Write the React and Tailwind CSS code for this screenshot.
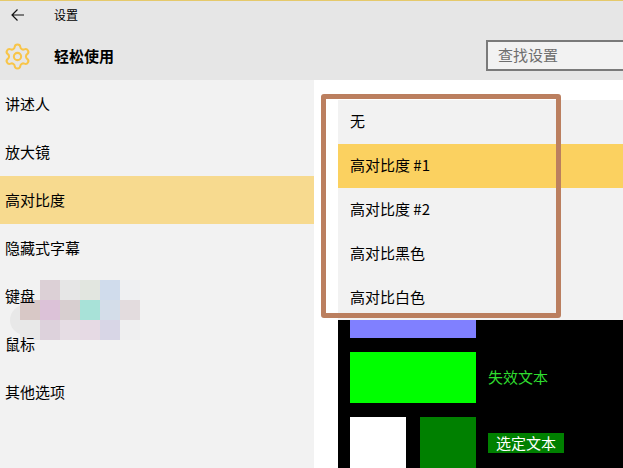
import React from 'react';
import { Settings } from 'lucide-react';

const navItems = ['讲述人', '放大镜', '高对比度', '隐藏式字幕', '键盘', '鼠标', '其他选项'];
const themes = ['无', '高对比度 #1', '高对比度 #2', '高对比黑色', '高对比白色'];

// blurred patch over the sidebar
const mosaic = [
  'bg-transparent', 'bg-[#dcd0d6]', 'bg-[#e6e6e6]', 'bg-[#e2e6e0]', 'bg-[#d0dcec]', 'bg-[#eff0f2]',
  'bg-[#d8c8c6]', 'bg-[#dcc2d8]', 'bg-[#d8cfd0]', 'bg-[#a8e2d8]', 'bg-[#d4dde9]', 'bg-[#e3dcde]',
  'bg-[#e8e8e8]', 'bg-[#ddd2dc]', 'bg-[#e6dde4]', 'bg-[#e6dae4]', 'bg-[#d8d6e6]', 'bg-[#efeff0]',
];

const App = () => {
  return (
    <div className="relative w-[623px] h-[468px] overflow-hidden flex flex-col bg-white text-black text-[15px] font-['Noto_Sans_CJK_SC','Liberation_Sans',sans-serif]">
      <div className="h-[80px] shrink-0 bg-[#e6e6e6] border-t border-[#e5c96b]">
        <div className="h-[28px] flex items-center">
          <div className="w-[54px] pl-[11px]">
            <svg width="14" height="14" viewBox="0 0 14 14" fill="none" stroke="#111" strokeWidth="1.2">
              <path d="M13 7H1M6.5 1.5L1 7l5.5 5.5" />
            </svg>
          </div>
          <span className="text-[12px]">设置</span>
        </div>
        <div className="mt-[3px] h-[48px] flex items-center">
          <div className="w-[54px] pl-[3px]">
            <Settings size={29} strokeWidth={1.7} className="text-[#f8c549]" />
          </div>
          <span className="font-semibold flex-1">轻松使用</span>
          <div className="w-[137px] h-[31px] mb-[1px] border-2 border-r-0 border-[#7a7a7a] bg-[#f2f2f2] pl-[10px] flex items-center text-[#6e6e6e]">
            查找设置
          </div>
        </div>
      </div>

      <div className="flex-1 flex min-h-0">
        <div className="relative w-[314px] shrink-0 bg-[#f2f2f2]">
          <div className="absolute left-[10px] top-[225px] w-[30px] h-[30px] rounded-full bg-[#e8e8e8]" />
          <div className="absolute left-[20px] top-[200px] grid grid-cols-[repeat(6,20px)] grid-rows-[repeat(3,20px)]">
            {mosaic.map((c, i) => (
              <div key={i} className={c} />
            ))}
          </div>
          {navItems.map((item) => (
            <div
              key={item}
              className={'relative h-[48px] pl-[5px] flex items-center ' + (item === '高对比度' ? 'bg-[#f7da8f]' : '')}
            >
              {item}
            </div>
          ))}
        </div>

        <div className="flex-1 flex flex-col pl-[24px] pt-[20px] min-w-0">
          <div>
            {themes.map((t, i) => (
              <div
                key={t}
                className={'h-[44px] pl-[12px] pb-[2px] flex items-center ' + (i === 1 ? 'bg-[#fbd160]' : 'bg-[#f2f2f2]')}
              >
                {t}
              </div>
            ))}
          </div>
          <div className="flex-1 bg-black pl-[12px]">
            <div className="w-[126px] h-[18px] bg-[#8080ff]" />
            <div className="mt-[14px] flex items-center gap-[12px]">
              <div className="w-[126px] h-[51px] bg-[#00ff00]" />
              <span className="text-[#2fdc2f] text-[15px] whitespace-nowrap">失效文本</span>
            </div>
            <div className="mt-[14px] flex items-start gap-[12px]">
              <div className="flex gap-[14px]">
                <div className="w-[56px] h-[51px] bg-white" />
                <div className="w-[56px] h-[51px] bg-[#008000]" />
              </div>
              <span className="mt-[16px] h-[20px] px-[8px] flex items-center bg-[#008000] text-white text-[15px]">选定文本</span>
            </div>
          </div>
        </div>
      </div>

      <div className="absolute left-[321px] top-[94px] w-[240px] h-[224px] border-[5px] border-[#bb7f5f] rounded-[3px]" />
    </div>
  );
};

export default App;
